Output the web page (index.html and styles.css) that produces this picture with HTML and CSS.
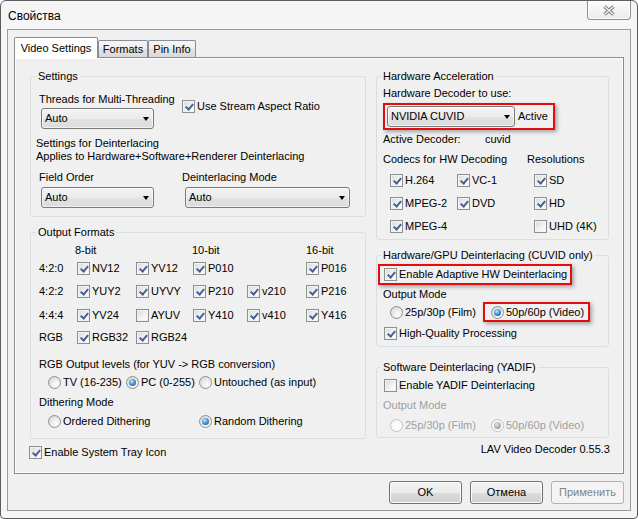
FILE: index.html
```html
<!DOCTYPE html>
<html>
<head>
<meta charset="utf-8">
<title>Свойства</title>
<link rel="stylesheet" href="styles.css">
</head>
<body>
<div class="window">
  <div class="titlebar">
    <span class="title">Свойства</span>
    <div class="close">
      <svg width="14" height="11" viewBox="0 0 14 11">
        <path d="M2.5 1.5 L11.5 9.5 M11.5 1.5 L2.5 9.5" stroke="#7c7c7c" stroke-width="3.4" fill="none"/>
        <path d="M2.5 1.5 L11.5 9.5 M11.5 1.5 L2.5 9.5" stroke="#f6f6f6" stroke-width="1.3" fill="none"/>
      </svg>
    </div>
  </div>
  <div class="client">
    <div class="tabs">
      <div class="tab active">Video Settings</div>
      <div class="tab t-formats">Formats</div>
      <div class="tab t-pin">Pin Info</div>
    </div>
    <div class="panel">
      <div class="page">
        <div class="cols">
          <div class="col col-left">
            <fieldset class="grp">
              <legend>Settings</legend>
              <div class="gbody settings-body">
                <div class="row1">
                  <div class="threads">
                    <div class="lbl">Threads for Multi-Threading</div>
                    <div class="combo w113">Auto</div>
                  </div>
                  <span class="cb on usar">Use Stream Aspect Ratio</span>
                </div>
                <div class="deint-note">Settings for Deinterlacing<br>Applies to Hardware+Software+Renderer Deinterlacing</div>
                <div class="row2">
                  <div class="fo">
                    <div class="lbl">Field Order</div>
                    <div class="combo w113">Auto</div>
                  </div>
                  <div class="dm">
                    <div class="lbl">Deinterlacing Mode</div>
                    <div class="combo w165">Auto</div>
                  </div>
                </div>
              </div>
            </fieldset>
            <fieldset class="grp formats">
              <legend>Output Formats</legend>
              <div class="gbody formats-body">
                <div class="fmt">
                  <span></span><span class="hd h8">8-bit</span><span></span><span class="hd h10">10-bit</span><span></span><span class="hd">16-bit</span>
                  <span class="rl">4:2:0</span><span class="cb on">NV12</span><span class="cb on">YV12</span><span class="cb on">P010</span><span></span><span class="cb on">P016</span>
                  <span class="rl">4:2:2</span><span class="cb on">YUY2</span><span class="cb on">UYVY</span><span class="cb on">P210</span><span class="cb on">v210</span><span class="cb on">P216</span>
                  <span class="rl">4:4:4</span><span class="cb on">YV24</span><span class="cb">AYUV</span><span class="cb on">Y410</span><span class="cb on">v410</span><span class="cb on">Y416</span>
                  <span class="rl">RGB</span><span class="cb on">RGB32</span><span class="cb on">RGB24</span>
                </div>
                <div class="lbl rgb-lvl">RGB Output levels (for YUV -&gt; RGB conversion)</div>
                <div class="radios r-levels">
                  <span class="rb w78">TV (16-235)</span>
                  <span class="rb on w73">PC (0-255)</span>
                  <span class="rb">Untouched (as input)</span>
                </div>
                <div class="lbl dith">Dithering Mode</div>
                <div class="radios r-dith">
                  <span class="rb w151">Ordered Dithering</span>
                  <span class="rb on">Random Dithering</span>
                </div>
              </div>
            </fieldset>
          </div>
          <div class="col col-right">
            <fieldset class="grp rgrp">
              <legend>Hardware Acceleration</legend>
              <div class="gbody hw-body">
                <div class="lbl">Hardware Decoder to use:</div>
                <div class="redbox rb-dec">
                  <div class="combo w128">NVIDIA CUVID</div>
                  <span class="active-lbl">Active</span>
                </div>
                <div class="kv">
                  <span class="k102">Active Decoder:</span><span>cuvid</span>
                </div>
                <div class="kv codecs-hd">
                  <span class="k144">Codecs for HW Decoding</span><span>Resolutions</span>
                </div>
                <div class="codecs">
                  <span class="cb on">H.264</span><span class="cb on">VC-1</span><span class="cb on">SD</span>
                  <span class="cb on">MPEG-2</span><span class="cb on">DVD</span><span class="cb on">HD</span>
                  <span class="cb on">MPEG-4</span><span></span><span class="cb">UHD (4K)</span>
                </div>
              </div>
            </fieldset>
            <fieldset class="grp rgrp gpu">
              <legend>Hardware/GPU Deinterlacing (CUVID only)</legend>
              <div class="gbody gpu-body">
                <div class="redbox rb-adapt">
                  <span class="cb on">Enable Adaptive HW Deinterlacing</span>
                </div>
                <div class="lbl om">Output Mode</div>
                <div class="moderow">
                  <span class="rb w93">25p/30p (Film)</span>
                  <div class="redbox rb-video">
                    <span class="rb on">50p/60p (Video)</span>
                  </div>
                </div>
                <span class="cb on hq">High-Quality Processing</span>
              </div>
            </fieldset>
            <fieldset class="grp rgrp sw">
              <legend>Software Deinterlacing (YADIF)</legend>
              <div class="gbody sw-body">
                <span class="cb yadif">Enable YADIF Deinterlacing</span>
                <div class="lbl om2 dis-text">Output Mode</div>
                <div class="moderow2">
                  <span class="rb dis w101">25p/30p (Film)</span>
                  <span class="rb dis on">50p/60p (Video)</span>
                </div>
              </div>
            </fieldset>
          </div>
        </div>
        <div class="footer">
          <span class="cb on tray">Enable System Tray Icon</span>
          <span class="version">LAV Video Decoder 0.55.3</span>
        </div>
      </div>
    </div>
    <div class="buttons">
      <div class="btn">OK</div>
      <div class="btn">Отмена</div>
      <div class="btn dis">Применить</div>
    </div>
  </div>
</div>
</body>
</html>
```

FILE: styles.css
```css
html, body {
  margin: 0;
  padding: 0;
  background: #ffffff;
}
body {
  font-family: "Liberation Sans", Arial, sans-serif;
  font-size: 11px;
  line-height: 13px;
  color: #000;
}

.window {
  width: 638px;
  height: 519px;
  box-sizing: border-box;
  border: 1px solid #5c5c5c;
  border-radius: 6px 6px 4px 4px;
  background: #f5f5f5;
  padding: 0 6px 7px 6px;
  display: flex;
  flex-direction: column;
}

.titlebar {
  height: 28px;
  display: flex;
  justify-content: space-between;
  align-items: flex-start;
  padding-left: 1px;
}
.title {
  font-size: 12px;
  line-height: 15px;
  margin-top: 8px;
  color: #000;
}
.close {
  width: 44px;
  height: 19px;
  box-sizing: border-box;
  border: 1px solid #8d8d8d;
  border-top: none;
  border-radius: 0 0 4px 4px;
  background: linear-gradient(#fbfbfb, #ececec);
  box-shadow: inset 0 0 0 1px #ffffff;
  display: flex;
  align-items: center;
  justify-content: center;
}

.client {
  height: 482px;
  box-sizing: border-box;
  border: 1px solid #9a9a9a;
  background: #f0f0f0;
  padding: 7px 6px 6px 6px;
}

.tabs {
  display: flex;
  height: 20px;
  align-items: flex-end;
}
.tab {
  box-sizing: border-box;
  border: 1px solid #898c95;
  border-bottom: none;
  height: 17px;
  display: flex;
  justify-content: center;
  padding-top: 2px;
  background: linear-gradient(#f6f6f6, #ededed 50%, #e2e2e2 51%, #dadada);
  border-radius: 2px 2px 0 0;
}
.tab.active {
  width: 84px;
  height: 21px;
  margin-bottom: -1px;
  background: #ffffff;
  position: relative;
  z-index: 1;
  padding-top: 4px;
}
.t-formats { width: 50px; }
.t-pin { width: 48px; }

.panel {
  height: 417px;
  box-sizing: border-box;
  border: 1px solid #898c95;
  background: #ffffff;
  padding: 1px;
}
.page {
  height: 100%;
  box-sizing: border-box;
  background: #f0f0f0;
  padding: 11px 13px 0 14px;
}

.cols {
  display: flex;
  gap: 10px;
}
.col-left { width: 336px; }
.col-right { width: 233px; }

.grp {
  margin: 0;
  padding: 0;
  min-width: 0;
  border: 1px solid #d5dfe5;
  border-radius: 3px;
}
.grp legend {
  padding: 0 2px;
  margin-left: 5px;
  line-height: 13px;
}
.rgrp legend { margin-left: 4px; }

.lbl { white-space: nowrap; }

/* Settings */
.settings-body { padding: 10px 8px 8px 8px; }
.row1 { display: flex; align-items: flex-start; }
.threads { width: 143px; }
.threads .combo { margin-top: 2px; margin-left: 2px; }
.usar { margin-top: 7px; }
.deint-note { margin-top: 8px; margin-left: -3px; white-space: nowrap; }
.row2 { display: flex; margin-top: 8px; }
.fo { width: 143px; }
.fo .combo { margin-top: 3px; margin-left: 2px; }
.dm .combo { margin-top: 3px; margin-left: 3px; }

/* Combo */
.combo {
  box-sizing: border-box;
  height: 21px;
  border: 1px solid #7a7a7a;
  border-radius: 3px;
  background: linear-gradient(#f3f3f3, #ebebeb 50%, #e2e2e2 51%, #dcdcdc);
  box-shadow: inset 0 0 0 1px rgba(255,255,255,0.6);
  display: flex;
  align-items: center;
  padding-left: 3px;
  white-space: nowrap;
}
.combo::after {
  content: "";
  margin-left: auto;
  margin-right: 4px;
  border-left: 3.5px solid transparent;
  border-right: 3.5px solid transparent;
  border-top: 4px solid #000;
}
.w113 { width: 113px; }
.w165 { width: 165px; }
.w128 { width: 128px; }

/* Checkbox */
.cb {
  position: relative;
  display: flex;
  align-items: center;
  height: 13px;
  white-space: nowrap;
}
.cb::before {
  content: "";
  flex: none;
  width: 13px;
  height: 13px;
  box-sizing: border-box;
  border: 1px solid #8e8f8f;
  background: linear-gradient(135deg, #d8d8d8, #f4f4f4 60%, #ffffff);
  box-shadow: inset 0 0 0 1px #f3f3f3;
  margin-right: 2px;
}
.cb.on::after {
  content: "";
  position: absolute;
  left: 4.5px;
  top: 1.5px;
  width: 2.5px;
  height: 6px;
  border: solid #4a5f97;
  border-width: 0 2px 2px 0;
  transform: rotate(40deg);
}

/* Radio */
.rb {
  position: relative;
  display: flex;
  align-items: center;
  height: 13px;
  white-space: nowrap;
}
.rb::before {
  content: "";
  flex: none;
  width: 13px;
  height: 13px;
  box-sizing: border-box;
  border-radius: 50%;
  border: 1px solid #8e8f8f;
  background: radial-gradient(circle at 65% 70%, #ffffff, #e6e6e6 55%, #cfcfcf);
  margin-right: 2px;
}
.rb.on::after {
  content: "";
  position: absolute;
  left: 3px;
  top: 3px;
  width: 7px;
  height: 7px;
  border-radius: 50%;
  background: radial-gradient(circle at 40% 35%, #c4ecff, #3c8fd0 50%, #1b4a80);
}
.rb.dis { color: #a0a0a0; }
.rb.dis::before {
  border-color: #c2c2c2;
  background: radial-gradient(circle at 65% 70%, #ffffff, #f2f2f2);
}
.rb.dis.on::after {
  background: radial-gradient(circle at 40% 35%, #e6e6e6, #a8a8a8 60%, #8e8e8e);
}
.dis-text { color: #a0a0a0; }

/* Output formats */
.grp.formats { margin-top: 9px; }
.formats-body { padding: 5px 8px 10px 8px; }
.fmt {
  display: grid;
  grid-template-columns: 38px 59px 57px 54px 59px auto;
  grid-template-rows: 18px 23px 24px 22px 13px;
  align-items: start;
}
.fmt > span { line-height: 13px; }
.hd.h8 { margin-left: -2px; }
.hd.h10 { margin-left: -1px; }
.rgb-lvl { margin-top: 14px; }
.radios { display: flex; margin-left: 9px; }
.r-levels { margin-top: 5px; }
.dith { margin-top: 7px; }
.r-dith { margin-top: 6px; }
.w78 { width: 78px; }
.w73 { width: 73px; }
.w151 { width: 151px; }
.w93 { width: 93px; }
.w101 { width: 101px; }

/* Hardware acceleration */
.hw-body { padding: 4px 6px 6px 6px; }
.redbox {
  display: flex;
  align-items: center;
  width: fit-content;
  box-sizing: border-box;
  border: 2px solid #e40c0c;
  box-shadow: 2px 2px 4px rgba(0,0,0,0.32);
}
.rb-dec {
  margin-top: 3px;
  padding: 1px 5px 1px 2px;
}
.active-lbl { margin-left: 3px; }
.kv { display: flex; margin-top: 3px; white-space: nowrap; }
.k102 { width: 102px; }
.k144 { width: 144px; }
.codecs-hd { margin-top: 7px; }
.codecs {
  display: grid;
  grid-template-columns: 67px 77px auto;
  grid-template-rows: 23px 23px 13px;
  margin-top: 8px;
  margin-left: 7px;
  align-items: start;
}

/* GPU deinterlacing */
.grp.gpu { margin-top: 9px; }
.gpu-body { padding: 2px 6px 6px 6px; }
.rb-adapt {
  margin-left: -5px;
  padding: 2px 3px 2px 4px;
}
.om { margin-top: 3px; }
.moderow {
  display: flex;
  align-items: center;
  margin-top: 1px;
  margin-left: 7px;
}
.rb-video {
  padding: 2px 4px 1px 6px;
}
.hq { margin-top: 5px; margin-left: 1px; }

/* Software deinterlacing */
.grp.sw { margin-top: 14px; }
.sw-body { padding: 5px 6px 5px 6px; }
.yadif { margin-left: 1px; }
.om2 { margin-top: 7px; }
.moderow2 { display: flex; margin-top: 7px; margin-left: 7px; }

/* Footer */
.footer {
  display: flex;
  justify-content: space-between;
  align-items: flex-start;
  margin-top: 7px;
}
.tray { margin-left: -1px; }
.version { margin-top: -3px; margin-right: -1px; white-space: nowrap; }

/* Buttons */
.buttons {
  display: flex;
  justify-content: flex-end;
  gap: 8px;
  margin-top: 7px;
}
.btn {
  width: 73px;
  height: 23px;
  box-sizing: border-box;
  border: 1px solid #707070;
  border-radius: 3px;
  background: linear-gradient(#f2f2f2, #ebebeb 50%, #dddddd 51%, #cfcfcf);
  box-shadow: inset 0 0 0 1px #fcfcfc;
  display: flex;
  align-items: center;
  justify-content: center;
}
.btn.dis {
  border-color: #adb2b5;
  background: #f4f4f4;
  box-shadow: none;
  color: #838383;
}
```
